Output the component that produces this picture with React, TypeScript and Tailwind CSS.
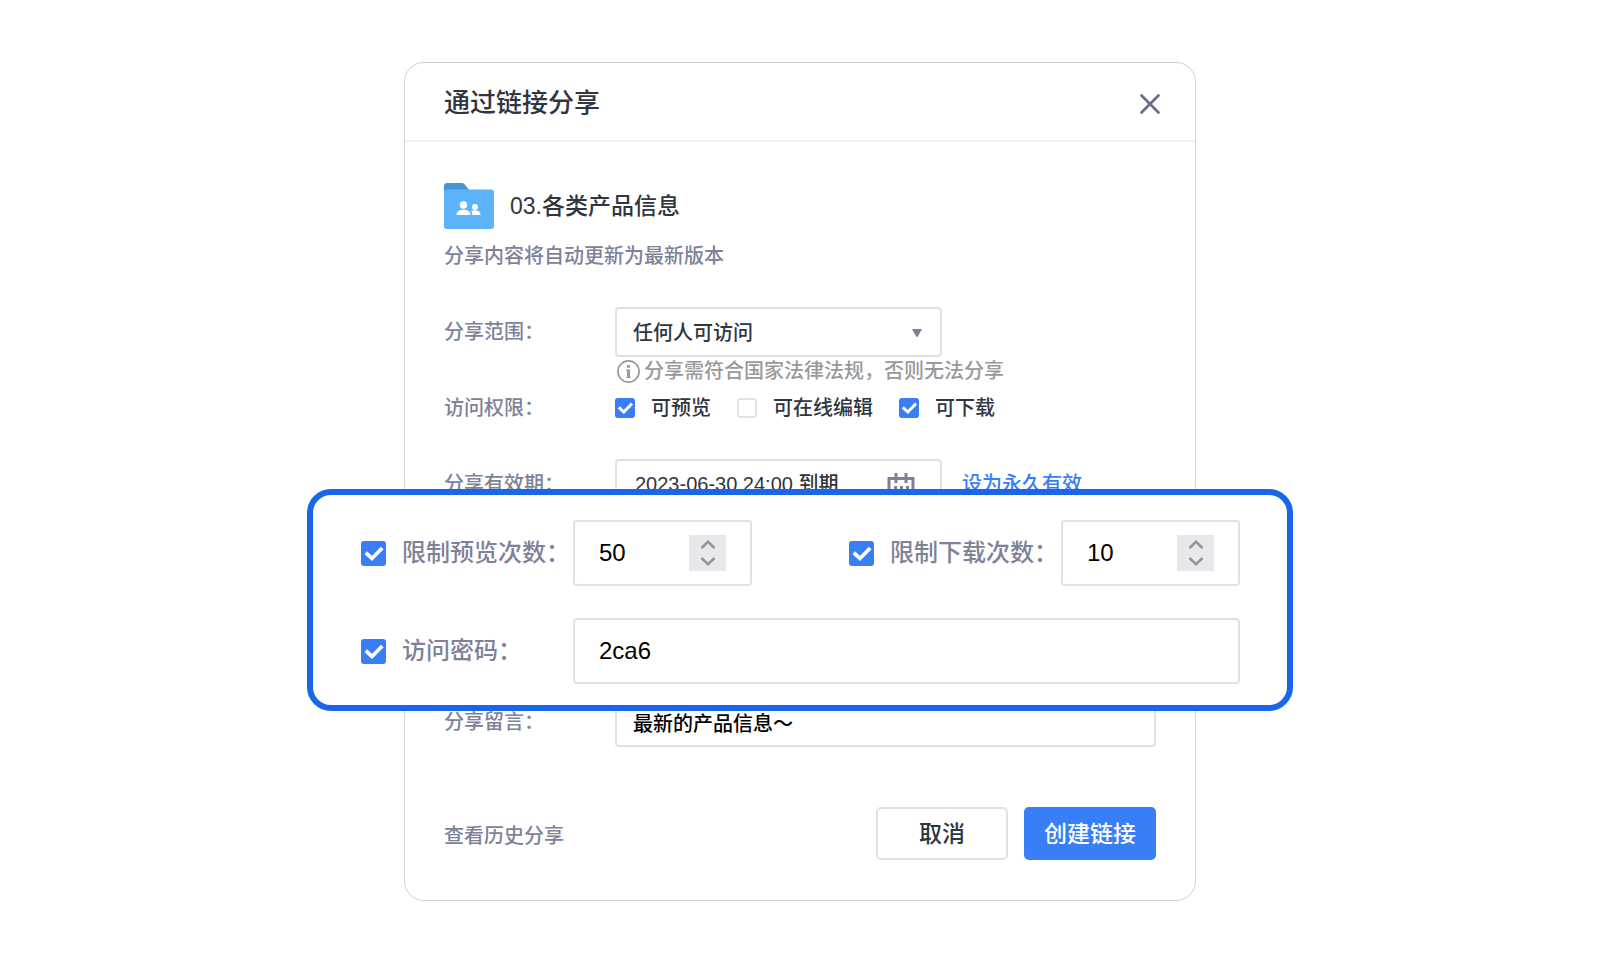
import { useState } from 'react';
import type { ReactNode } from 'react';

function CheckBox({ id, checked, onChange, large }: { id: string; checked: boolean; onChange: () => void; large?: boolean }) {
  return (
    <span className={`relative block shrink-0 ${large ? 'size-[25px]' : 'size-5'}`}>
      <input id={id} type="checkbox" checked={checked} onChange={onChange}
        className="block size-full appearance-none rounded-[3px] border-2 border-[#e0e1e8] bg-white checked:border-[#387ef6] checked:bg-[#387ef6]" />
      {checked && (
        <svg viewBox="0 0 20 20" fill="none" stroke="white" strokeWidth="3" className="pointer-events-none absolute inset-0 size-full">
          <path d="M3.800 9.400 8.800 14 17 5.600" />
        </svg>
      )}
    </span>
  );
}

function Row({ label, htmlFor, className, children }: { label: string; htmlFor?: string; className: string; children: ReactNode }) {
  return (
    <div className={`flex items-center ${className}`}>
      <label htmlFor={htmlFor} className="w-[171px] shrink-0 text-[#7d8299]">{label}</label>
      {children}
    </div>
  );
}

function FolderIcon() {
  return (
    <svg width="50" height="46" viewBox="0 0 50 46" className="shrink-0">
      <path d="M0 12V3a3 3 0 0 1 3-3h14.500a4 4 0 0 1 3 1.300L26 8v6H0z" fill="#4595d6" />
      <rect y="6.500" width="50" height="39.500" rx="3" fill="#5cb3fa" />
      <g fill="white">
        <circle cx="19.500" cy="22" r="3.700" />
        <path d="M12.500 32c0-3.600 3.200-5.200 7-5.200s7 1.600 7 5.200z" />
        <circle cx="31" cy="24" r="3" />
        <path d="M28.300 32c0-1.700-.5-3-1.300-4 1.200-.5 2.600-.7 4-.7 3.200 0 5.500 1.500 5.500 4.700z" />
      </g>
    </svg>
  );
}

function CountField({ id, label, initial }: { id: string; label: string; initial: number }) {
  const [on, setOn] = useState(true);
  const [count, setCount] = useState(initial);
  return (
    <div className="flex items-center">
      <CheckBox id={`${id}-on`} checked={on} onChange={() => setOn(!on)} large />
      <label htmlFor={`${id}-on`} className="ml-4 w-[171px] text-2xl text-[#7d8299]">{label}</label>
      <div className="flex h-[66px] w-[179px] items-center rounded-[4px] border-2 border-[#e0e1e8] pr-6">
        <input id={id} aria-label={label} inputMode="numeric" value={count} onChange={e => setCount(Number(e.target.value) || 0)}
          className="min-w-0 flex-1 pl-6 text-2xl text-black outline-none" />
        <div className="flex h-9 w-[37px] flex-col bg-[#e8e7ec] text-[#96959e]">
          <button aria-label="+" onClick={() => setCount(count + 1)} className="flex flex-1 items-end justify-center pb-1">
            <svg width="16" height="9" viewBox="0 0 16 9" fill="none" stroke="currentColor" strokeWidth="2.500"><path d="M1.500 8 8 1.800 14.500 8" /></svg>
          </button>
          <button aria-label="-" onClick={() => setCount(Math.max(0, count - 1))} className="flex flex-1 items-start justify-center pt-1">
            <svg width="16" height="9" viewBox="0 0 16 9" fill="none" stroke="currentColor" strokeWidth="2.500"><path d="M1.500 1 8 7.200 14.500 1" /></svg>
          </button>
        </div>
      </div>
    </div>
  );
}

const permissions = [
  { id: 'preview', label: '可预览' },
  { id: 'edit', label: '可在线编辑' },
  { id: 'download', label: '可下载' },
];

export default function App() {
  const [perms, setPerms] = useState<Record<string, boolean>>({ preview: true, edit: false, download: true });
  const [usePassword, setUsePassword] = useState(true);

  return (
    <main className="flex min-h-screen justify-center bg-white pt-[62px] pb-[60px] font-['Liberation_Sans','Noto_Sans_CJK_SC',sans-serif] text-xl/7 font-medium text-[#2f3640]">
      <section className="relative w-full max-w-[792px] self-start rounded-[20px] border border-[#d0d0d0] bg-white">
        <header className="flex h-[79px] items-center justify-between border-b-2 border-[#f0f0f0] pr-9 pl-[39px]">
          <h1 className="pt-[2px] text-[26px] font-medium">通过链接分享</h1>
          <button aria-label="关闭" className="pt-1">
            <svg width="18" height="18" viewBox="0 0 18 18" fill="none" stroke="#656b87" strokeWidth="2.600" strokeLinecap="round" className="overflow-visible">
              <path d="M.5.5 17.500 17.500M17.500.5.5 17.500" />
            </svg>
          </button>
        </header>

        <div className="px-[39px] pt-[41px] pb-10">
          <div className="flex items-center gap-4">
            <FolderIcon />
            <h2 className="text-[23px] font-medium">03.各类产品信息</h2>
          </div>
          <p className="mt-[13px] text-[#7d8299]">分享内容将自动更新为最新版本</p>

          <Row label="分享范围：" htmlFor="scope" className="mt-[37px]">
            <div className="relative h-[50px] w-[327px]">
              <select id="scope" className="size-full appearance-none rounded-[4px] border-2 border-[#e0e1e8] bg-white px-4 pt-[2px] outline-none">
                <option>任何人可访问</option>
              </select>
              <svg width="10" height="8" viewBox="0 0 10 8" fill="#7d8299" className="pointer-events-none absolute top-[22px] right-5">
                <path d="M0 0h10L6 7.300a1.200 1.200 0 0 1-2 0z" />
              </svg>
            </div>
          </Row>
          <p className="ml-[171px] flex items-center gap-1 pl-[2px] text-[#999999]">
            <svg width="23" height="23" viewBox="0 0 23 23" fill="none" stroke="currentColor" className="shrink-0">
              <circle cx="11.500" cy="11.500" r="10.600" strokeWidth="1.700" />
              <path d="M11.500 5v2.800M11.500 9.500v8.300" strokeWidth="3" />
              <path d="M9.200 10.100h2.300M9.200 17.300h4.600" strokeWidth="1" />
            </svg>
            分享需符合国家法律法规，否则无法分享
          </p>

          <Row label="访问权限：" className="mt-[9px]">
            <div className="flex gap-[26px]">
              {permissions.map(p => (
                <div key={p.id} className="flex items-center gap-4">
                  <CheckBox id={p.id} checked={perms[p.id]} onChange={() => setPerms(v => ({ ...v, [p.id]: !v[p.id] }))} />
                  <label htmlFor={p.id}>{p.label}</label>
                </div>
              ))}
            </div>
          </Row>

          <Row label="分享有效期：" htmlFor="expiry" className="mt-[37px]">
            <div className="flex h-[50px] w-[327px] items-center rounded-[4px] border-2 border-[#e0e1e8] pr-[25px] pl-[18px]">
              <input id="expiry" defaultValue="2023-06-30 24:00 到期" className="min-w-0 flex-1 outline-none" />
              <svg width="28" height="24" viewBox="0 0 28 24" fill="none" stroke="#7d8299" strokeWidth="3">
                <path d="M2 6.500h24v16H2zM9 1v10M19 1v10" />
                <path d="M7 15.500h3M13 15.500h3M19 15.500h3" />
              </svg>
            </div>
            <a href="#permanent" className="ml-5 text-[#387ef6]">设为永久有效</a>
          </Row>

          <Row label="分享留言：" htmlFor="message" className="mt-[188px]">
            <input id="message" defaultValue="最新的产品信息～" className="h-[50px] min-w-0 flex-1 rounded-[4px] border-2 border-[#e0e1e8] px-4 text-black outline-none" />
          </Row>

          <footer className="mt-[60px] flex items-center justify-between">
            <a href="#history" className="pt-1 text-[#7d8299]">查看历史分享</a>
            <div className="flex gap-4 text-[23px]">
              <button className="h-[53px] w-[132px] rounded-[5px] border-2 border-[#e0e1e8]">取消</button>
              <button className="h-[53px] w-[132px] rounded-[5px] bg-[#387ef6] text-white">创建链接</button>
            </div>
          </footer>
        </div>

        {/* enlarged limits panel, floats over the dialog */}
        <div className="absolute -inset-x-[98px] top-[426px] flex flex-col gap-8 rounded-3xl border-6 border-[#1a66eb] bg-white pt-[25px] pr-[47px] pb-[21px] pl-12">
          <div className="flex justify-between">
            <CountField id="preview-limit" label="限制预览次数：" initial={50} />
            <CountField id="download-limit" label="限制下载次数：" initial={10} />
          </div>
          <div className="flex items-center">
            <CheckBox id="password-on" checked={usePassword} onChange={() => setUsePassword(!usePassword)} large />
            <label htmlFor="password-on" className="ml-4 w-[171px] text-2xl text-[#7d8299]">访问密码：</label>
            <input aria-label="访问密码" defaultValue="2ca6" className="h-[66px] min-w-0 flex-1 rounded-[4px] border-2 border-[#e0e1e8] px-6 text-2xl text-black outline-none" />
          </div>
        </div>
      </section>
    </main>
  );
}
